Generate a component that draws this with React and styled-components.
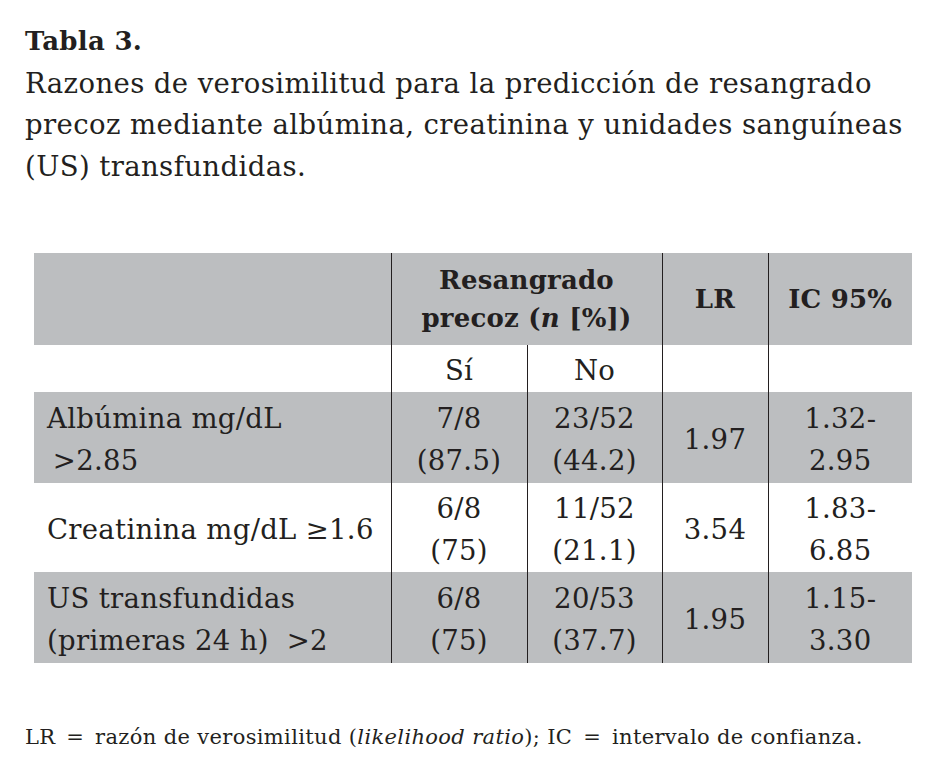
import styled, { createGlobalStyle } from 'styled-components';

const Global = createGlobalStyle`
  html, body { margin: 0; padding: 0; background: #fff; }
  body { font-family: "DejaVu Serif", "Liberation Serif", serif; color: #231f20; }
`;

const rows = [
  { label: ['Albúmina mg/dL', '\u2009>2.85'], si: ['7/8', '(87.5)'], no: ['23/52', '(44.2)'], lr: '1.97', ic: ['1.32-', '2.95'], shade: true, h: 91 },
  { label: ['Creatinina mg/dL ≥1.6'], si: ['6/8', '(75)'], no: ['11/52', '(21.1)'], lr: '3.54', ic: ['1.83-', '6.85'], shade: false, h: 89 },
  { label: ['US transfundidas', '(primeras 24 h)\u00a0 >2'], si: ['6/8', '(75)'], no: ['20/53', '(37.7)'], lr: '1.95', ic: ['1.15-', '3.30'], shade: true, h: 91 },
];

function Lines({ items }) {
  return items.map((t, i) => <Line key={i}>{t}</Line>);
}

export default function App() {
  return (
    <Page>
      <Global />
      <Title>Tabla 3.</Title>
      <Caption>
        Razones de verosimilitud para la predicción de resangrado precoz mediante albúmina, creatinina y unidades sanguíneas (US) transfundidas.
      </Caption>

      <Table>
        <colgroup>
          <col style={{ width: 357 }} />
          <col style={{ width: 136 }} />
          <col style={{ width: 135 }} />
          <col style={{ width: 106 }} />
          <col style={{ width: 144 }} />
        </colgroup>
        <tbody>
          <Row $shade $h={92}>
            <Head />
            <Head colSpan={2} $rule>
              <HeadLines>Resangrado<br />precoz (<em>n</em> [%])</HeadLines>
            </Head>
            <Head $rule>LR</Head>
            <Head $rule>IC 95%</Head>
          </Row>
          <Row $h={47}>
            <Cell />
            <Cell $rule $center>Sí</Cell>
            <Cell $rule $center>No</Cell>
            <Cell $rule />
            <Cell $rule />
          </Row>
          {rows.map((r, i) => (
            <Row key={i} $shade={r.shade} $h={r.h}>
              <Cell><Lines items={r.label} /></Cell>
              <Cell $rule $center><Lines items={r.si} /></Cell>
              <Cell $rule $center><Lines items={r.no} /></Cell>
              <Cell $rule $center>{r.lr}</Cell>
              <Cell $rule $center><Lines items={r.ic} /></Cell>
            </Row>
          ))}
        </tbody>
      </Table>

      <Note>
        LR&ensp;=&ensp;razón de verosimilitud (<i>likelihood ratio</i>); IC&ensp;=&ensp;intervalo de confianza.
      </Note>
    </Page>
  );
}

const Page = styled.div`
  width: 933px;
  height: 775px;
  box-sizing: border-box;
  padding: 21px 0 0 25px;
  overflow: hidden;
`;

const Title = styled.div`
  font-weight: bold;
  font-size: 26px;
  letter-spacing: 0.3px;
  line-height: 41.5px;
`;

const Caption = styled.p`
  margin: 0;
  width: 900px;
  font-size: 27.5px;
  letter-spacing: 0.4px;
  line-height: 41.5px;
`;

const Table = styled.table`
  margin: 66px 0 0 9px;
  width: 878px;
  table-layout: fixed;
  border-collapse: collapse;
  border-spacing: 0;
`;

const Row = styled.tr`
  height: ${p => p.$h}px;
  background: ${p => (p.$shade ? '#bcbec0' : 'transparent')};
`;

const Head = styled.th`
  padding: 0;
  font-size: 26px;
  letter-spacing: 0.2px;
  font-weight: bold;
  text-align: center;
  vertical-align: middle;
  border-left: ${p => (p.$rule ? '1px solid #231f20' : 'none')};
  em { font-style: italic; }
`;

const HeadLines = styled.div`
  line-height: 38px;
`;

const Cell = styled.td`
  padding: 2px 0 0 ${p => (p.$center ? 0 : 13)}px;
  font-size: 27.5px;
  letter-spacing: 0.3px;
  line-height: 42px;
  text-align: ${p => (p.$center ? 'center' : 'left')};
  vertical-align: middle;
  white-space: pre;
  border-left: ${p => (p.$rule ? '1px solid #231f20' : 'none')};
`;

const Line = styled.div``;

const Note = styled.p`
  margin: 60px 0 0 0;
  font-size: 21px;
  letter-spacing: 0.35px;
  line-height: 28px;
`;
